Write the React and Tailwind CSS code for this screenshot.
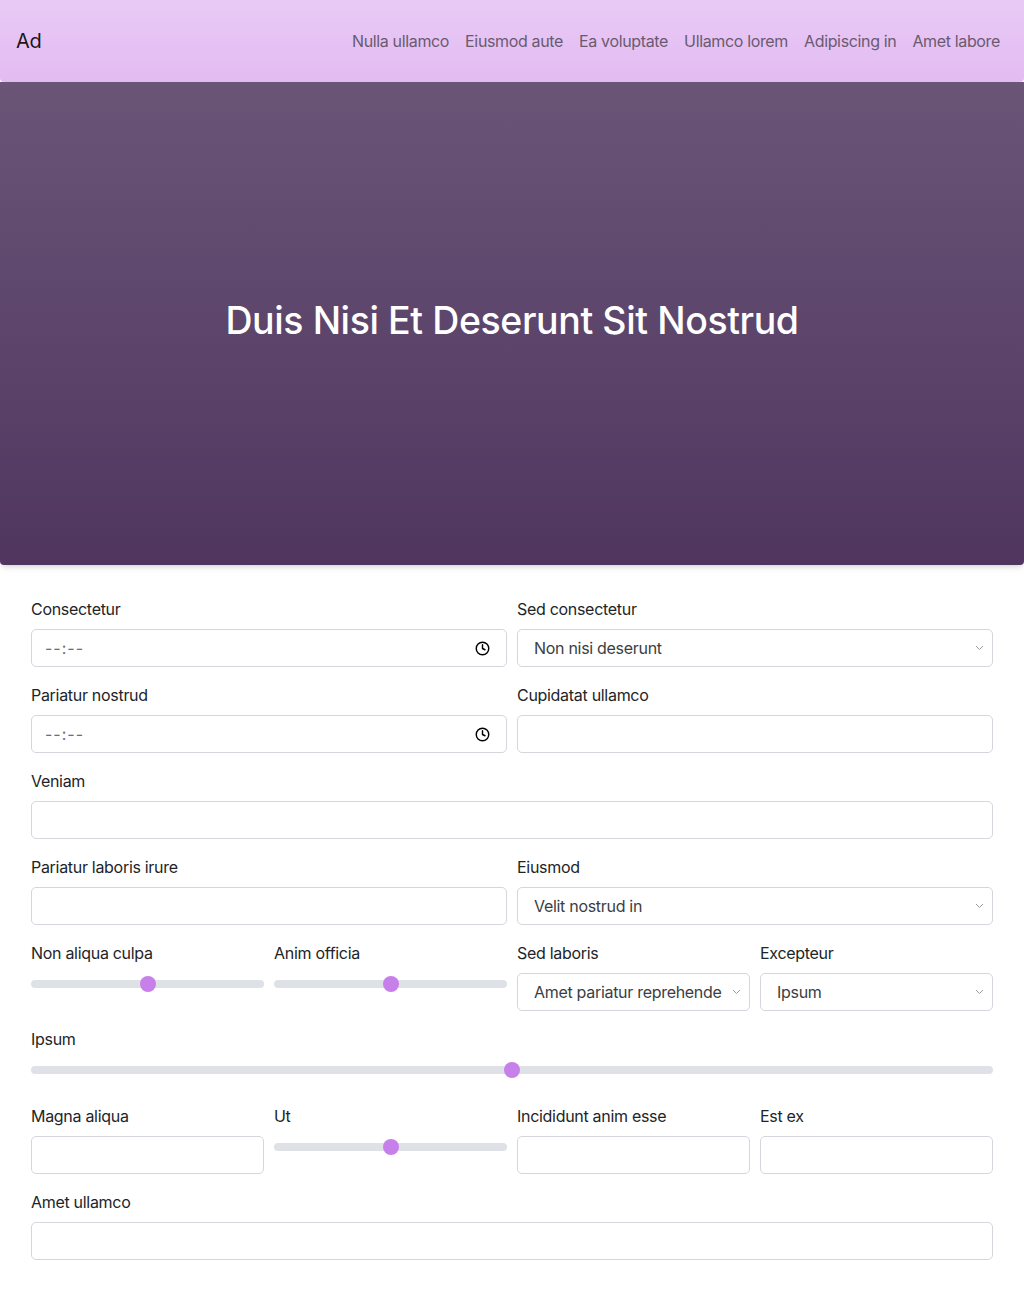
import { Clock } from 'lucide-react'

const navLinks = ['Nulla ullamco', 'Eiusmod aute', 'Ea voluptate', 'Ullamco lorem', 'Adipiscing in', 'Amet labore']

const Label = ({ children }) => (
  <label className="block mb-2 text-base leading-6 text-[#212529]">{children}</label>
)

const TimeInput = () => (
  <div className="h-[38px] flex items-center justify-between pl-[13px] pr-[16px] bg-white border border-[#d3d6db] rounded-[5px]">
    <span className="text-[#6c6f73] tracking-[1px]">--:--</span>
    <Clock size={15} strokeWidth={2.3} className="text-black" />
  </div>
)

const TextInput = () => (
  <div className="h-[38px] bg-white border border-[#d3d6db] rounded-[5px]" />
)

const Select = ({ value }) => (
  <div className="h-[38px] flex items-center pl-4 pr-[8px] bg-white border border-[#d3d6db] rounded-[5px]">
    <span className="flex-1 min-w-0 overflow-hidden whitespace-nowrap text-[#3a3e43]">{value}</span>
    <svg width="9" height="6" viewBox="0 0 9 6" className="shrink-0 ml-[9px]">
      <path d="M1 1l3.5 3.5L8 1" fill="none" stroke="#9a9ca0" strokeWidth="1" />
    </svg>
  </div>
)

// all sliders in the picture sit at the middle
const Slider = ({ tall }) => (
  <div className={`relative ${tall ? 'h-[29px]' : 'h-[22px]'}`}>
    <div className="absolute left-0 right-0 top-[7px] h-2 rounded-full bg-[#dee2e6]" />
    <div className="absolute left-1/2 top-[3px] w-4 h-4 -translate-x-1/2 rounded-full bg-[#c77fe9]" />
  </div>
)

const Field = ({ label, children }) => (
  <div>
    <Label>{label}</Label>
    {children}
  </div>
)

export default function App() {
  return (
    <div className="min-h-screen bg-white font-['Inter',sans-serif] tracking-[-0.3px]">
      {/* Navbar */}
      <header className="h-[82px] flex items-center justify-between px-4 rounded-b-[4px] bg-gradient-to-b from-[#e8c9f5] to-[#e3bcf2]">
        <span className="text-xl text-black/90">Ad</span>
        <nav className="flex items-center tracking-[-0.35px]">
          {navLinks.map((l) => (
            <a key={l} href="#" className="px-2 text-base text-[#6a5a71]">
              {l}
            </a>
          ))}
        </nav>
      </header>

      {/* Hero */}
      <section className="h-[483px] flex items-center justify-center pb-1 rounded-b-[4px] shadow-md bg-gradient-to-b from-[#6a5577] to-[#50365f]">
        <h1 className="text-[37.5px] font-medium text-white tracking-[-0.4px]">
          Duis Nisi Et Deserunt Sit Nostrud
        </h1>
      </section>

      {/* Form */}
      <main className="px-[31px] pt-8 pb-8">
        <div className="flex flex-col gap-4">
          <div className="grid grid-cols-2 gap-x-[10px]">
            <Field label="Consectetur"><TimeInput /></Field>
            <Field label="Sed consectetur"><Select value="Non nisi deserunt" /></Field>
          </div>
          <div className="grid grid-cols-2 gap-x-[10px]">
            <Field label="Pariatur nostrud"><TimeInput /></Field>
            <Field label="Cupidatat ullamco"><TextInput /></Field>
          </div>
          <Field label="Veniam"><TextInput /></Field>
          <div className="grid grid-cols-2 gap-x-[10px]">
            <Field label="Pariatur laboris irure"><TextInput /></Field>
            <Field label="Eiusmod"><Select value="Velit nostrud in" /></Field>
          </div>
          <div className="grid grid-cols-4 gap-x-[10px]">
            <Field label="Non aliqua culpa"><Slider /></Field>
            <Field label="Anim officia"><Slider /></Field>
            <Field label="Sed laboris"><Select value="Amet pariatur reprehende" /></Field>
            <Field label="Excepteur"><Select value="Ipsum" /></Field>
          </div>
          <Field label="Ipsum"><Slider tall /></Field>
          <div className="grid grid-cols-4 gap-x-[10px]">
            <Field label="Magna aliqua"><TextInput /></Field>
            <Field label="Ut"><Slider /></Field>
            <Field label="Incididunt anim esse"><TextInput /></Field>
            <Field label="Est ex"><TextInput /></Field>
          </div>
          <Field label="Amet ullamco"><TextInput /></Field>
        </div>
      </main>
    </div>
  )
}
